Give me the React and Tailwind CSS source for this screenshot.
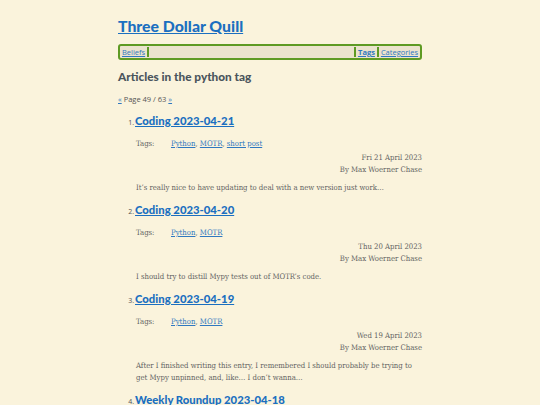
const posts = [
	{
		title: "Coding 2023-04-21",
		tags: ["Python", "MOTR", "short post"],
		date: "Fri 21 April 2023",
		summary: "It’s really nice to have updating to deal with a new version just work…",
	},
	{
		title: "Coding 2023-04-20",
		tags: ["Python", "MOTR"],
		date: "Thu 20 April 2023",
		summary: "I should try to distill Mypy tests out of MOTR’s code.",
	},
	{
		title: "Coding 2023-04-19",
		tags: ["Python", "MOTR"],
		date: "Wed 19 April 2023",
		summary:
			"After I finished writing this entry, I remembered I should probably be trying to get Mypy unpinned, and, like… I don’t wanna…",
	},
	{
		title: "Weekly Roundup 2023-04-18",
		tags: ["Python", "MOTR"],
		date: "Tue 18 April 2023",
		summary: "",
	},
];

const sans = "font-['Open_Sans',sans-serif]";
const head = "font-['Lato',sans-serif]";
const serif = "font-['DejaVu_Serif_Condensed','DejaVu_Serif',serif]";

const App = () => {
	return (
		<div className="min-h-screen bg-[#faf3dc] text-[#636363]">
			<div className="mx-auto w-[304px] pt-[13px]">
				<h1 className={`${head} text-[15.8px] font-black leading-[26px]`}>
					<a href="#" className="text-[#1b6fc0] underline">
						Three Dollar Quill
					</a>
				</h1>
				<nav
					className={`${sans} mt-[5px] flex h-[16px] items-center rounded-[3px] border-2 border-[#5e9a23] bg-[#ebe3cd] px-[2px] text-[7.5px]`}
				>
					<a href="#" className="border-r-2 border-[#5e9a23] pr-[2px] leading-[10px] text-[#2f78c0] underline">
						Beliefs
					</a>
					<div className="flex-1" />
					<a
						href="#"
						className="border-x-2 border-[#5e9a23] px-[2px] font-bold leading-[10px] text-[#2f78c0] underline"
					>
						Tags
					</a>
					<a href="#" className="pl-[2px] leading-[10px] text-[#2f78c0] underline">
						Categories
					</a>
				</nav>
				<h2 className={`${head} mt-[7px] text-[11.8px] font-black leading-[20px] text-[#4a555c]`}>
					Articles in the python tag
				</h2>
				<p className={`${sans} mt-[7px] text-[7.5px] leading-[10px] text-[#555]`}>
					<a href="#" className="text-[#2f78c0] underline">
						«
					</a>{" "}
					Page 49 / 63{" "}
					<a href="#" className="text-[#2f78c0] underline">
						»
					</a>
				</p>
				<ol className="mt-[7px] pl-[18px]">
					{posts.map((post, i) => (
						<li key={post.title} className="mb-[6px]">
							<div className="flex items-baseline">
								<span className={`${sans} -ml-[9px] w-[8px] pr-[1px] text-right text-[7px] text-[#555]`}>{i + 1}.</span>
								<a href="#" className={`${head} text-[11.3px] font-black leading-[20px] text-[#1b6fc0] underline`}>
									{post.title}
								</a>
							</div>
							<div className={`${serif} mt-[7px] flex text-[7.7px] leading-[11px]`}>
								<span className="w-[35px]">Tags:</span>
								<span>
									{post.tags.map((tag, j) => (
										<span key={tag}>
											<a href="#" className="text-[#2f78c0] underline">
												{tag}
											</a>
											{j < post.tags.length - 1 && ", "}
										</span>
									))}
								</span>
							</div>
							<div className={`${serif} mt-[3px] text-right text-[7.7px] leading-[12px]`}>
								<div>{post.date}</div>
								<div>By Max Woerner Chase</div>
							</div>
							{post.summary && (
								<p className={`${serif} mt-[6px] text-[7.7px] leading-[12px]`}>{post.summary}</p>
							)}
						</li>
					))}
				</ol>
			</div>
		</div>
	);
};

export default App;
